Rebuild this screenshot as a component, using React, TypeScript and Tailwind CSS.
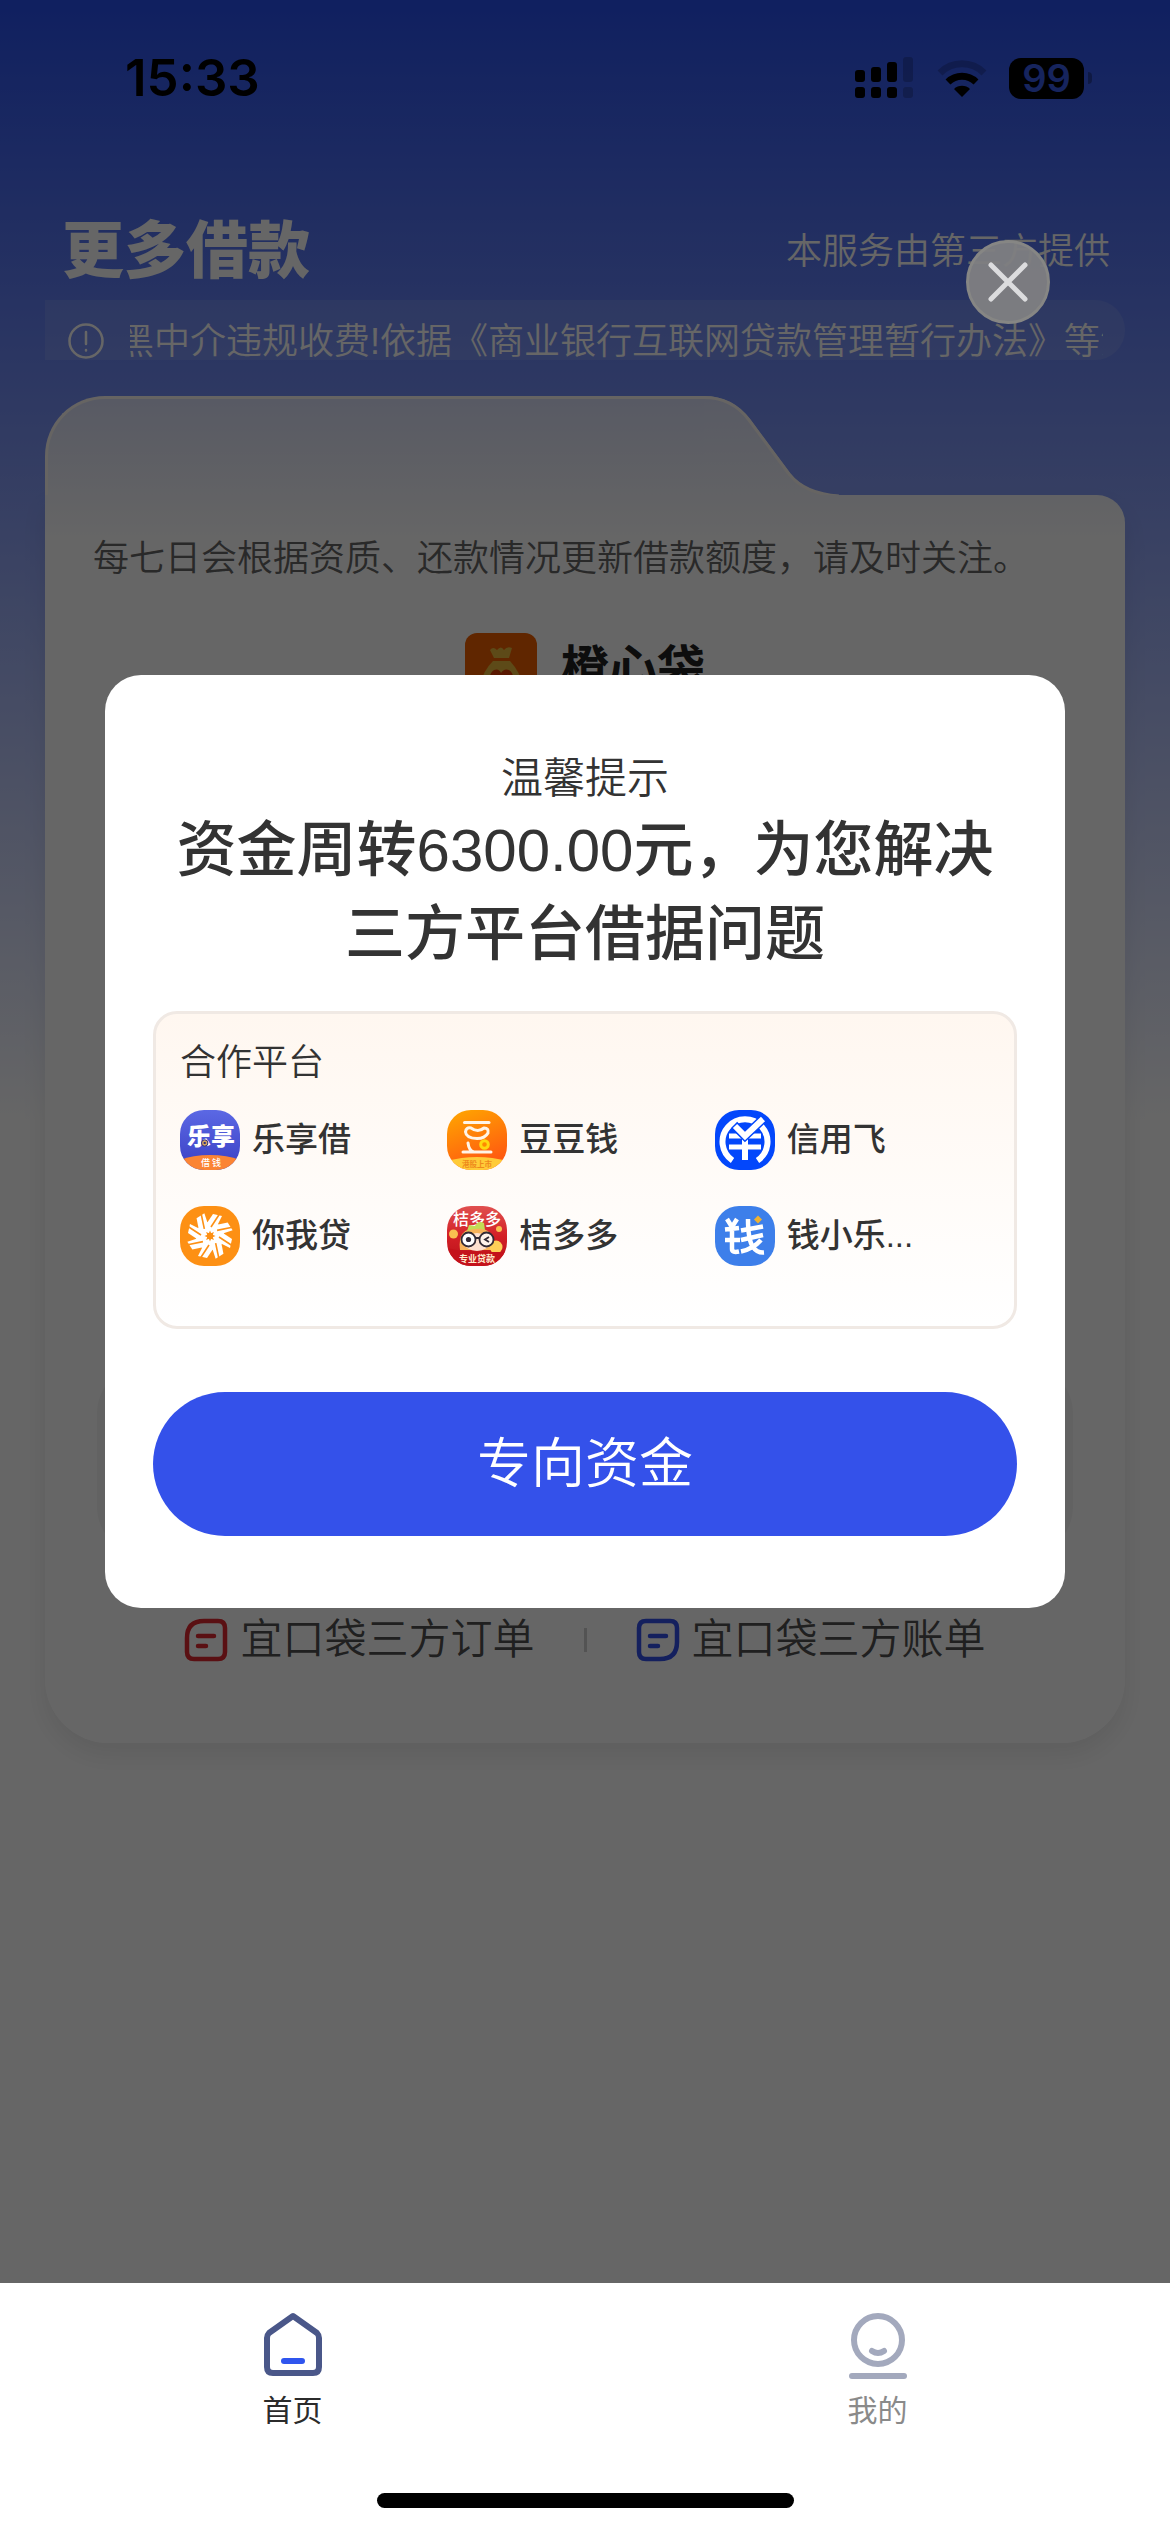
import type { ReactNode } from 'react';

function SignalIcon() {
  return (
    <svg className="h-[42px] w-[60px]" viewBox="0 0 60 42" aria-hidden="true">
      <rect x="0" y="13" width="10" height="12" rx="3" />
      <rect x="16" y="10" width="10" height="15" rx="3" />
      <rect x="32" y="5" width="10" height="20" rx="3" />
      <rect x="48" y="0" width="10" height="25" rx="3" opacity=".2" />
      <rect x="0" y="30" width="10" height="11" rx="3" />
      <rect x="16" y="30" width="10" height="11" rx="3" />
      <rect x="32" y="30" width="10" height="11" rx="3" />
      <rect x="48" y="30" width="10" height="11" rx="3" opacity=".2" />
    </svg>
  );
}

function WifiIcon() {
  return (
    <svg className="h-[40px] w-[50px]" viewBox="0 0 50 40" fill="none" aria-hidden="true">
      <path d="M3 15 A31 31 0 0 1 47 15" stroke="#000" strokeWidth="7" opacity=".2" />
      <path d="M11 24 A20 20 0 0 1 39 24" stroke="#000" strokeWidth="7" />
      <path d="M25 39 L17 31 A11.5 11.5 0 0 1 33 31 Z" fill="#000" />
    </svg>
  );
}

function StatusBar() {
  return (
    <div className="flex h-[156px] items-center justify-between pr-[78px] pl-[125px] font-['Inter',sans-serif] font-semibold">
      <span className="text-[51px] leading-[60px] text-black">15:33</span>
      <div className="flex items-center gap-[22px]">
        <SignalIcon />
        <WifiIcon />
        <div className="flex items-center gap-1">
          <span className="flex h-[41px] w-[75px] items-center justify-center rounded-xl bg-black text-[38px] leading-[41px] text-[#375be9]">
            99
          </span>
          <span className="h-[12px] w-[4px] rounded-r-full bg-black/30" />
        </div>
      </div>
    </div>
  );
}

function DocIcon({ color, flip }: { color: string; flip?: boolean }) {
  return (
    <svg className="size-[44px]" viewBox="0 0 44 44" fill="none" stroke={color} strokeWidth="4.5" strokeLinecap="round" strokeLinejoin="round" aria-hidden="true">
      {flip ? (
        <path d="M10 3 H34 Q41 3 41 10 V24 Q41 41 24 41 H10 Q3 41 3 34 V10 Q3 3 10 3 Z" />
      ) : (
        <path d="M20 3 H34 Q41 3 41 10 V34 Q41 41 34 41 H10 Q3 41 3 34 V20 Q3 3 20 3 Z" />
      )}
      <path d="M14 18 H30 M14 28 H22" />
    </svg>
  );
}

function BagIcon() {
  return (
    <svg className="size-[72px]" viewBox="0 0 72 72" aria-hidden="true">
      <rect width="72" height="72" rx="12" fill="#f06000" />
      <path d="M25 17 Q28 13 32 17 Q36 12 39 17 Q42 13 47 15 L44 25 H29 Z" fill="#e8b83c" />
      <path d="M28 28 H45 Q56 40 57 52 Q56 64 44 64 H28 Q17 64 15 52 Q18 38 28 28 Z" fill="#e8b83c" />
      <path d="M36 60 L27 52 Q22 42 29 37 Q34 35 36 40 Q39 35 44 37 Q51 42 46 52 Z" fill="#e03c00" />
    </svg>
  );
}

function PlatformIcon({ children }: { children: ReactNode }) {
  return (
    <svg className="size-[60px] shrink-0 rounded-[24px] font-['Noto_Sans_CJK_SC',sans-serif]" viewBox="0 0 60 60" fill="none" aria-hidden="true">
      {children}
    </svg>
  );
}

function LexiangIcon() {
  return (
    <PlatformIcon>
      <defs>
        <linearGradient id="lx" x1="0" y1="0" x2="0" y2="1">
          <stop offset="0" stopColor="#5b68e4" />
          <stop offset="1" stopColor="#3a3fc4" />
        </linearGradient>
      </defs>
      <rect width="60" height="60" fill="url(#lx)" />
      <text x="31" y="34.5" textAnchor="middle" fontSize="24" fontWeight="900" fill="#fff">乐享</text>
      <circle cx="24.7" cy="33" r="3.2" fill="#d8a35c" stroke="#2c2f80" strokeWidth="1" />
      <rect x="23.7" y="32" width="2" height="2" fill="#2c2f80" />
      <ellipse cx="30" cy="62" rx="42" ry="17" fill="#fb8434" />
      <text x="31" y="55.5" textAnchor="middle" fontSize="9" fontWeight="500" fill="#fff">借 钱</text>
    </PlatformIcon>
  );
}

function DoudouIcon() {
  return (
    <PlatformIcon>
      <defs>
        <linearGradient id="dd" x1="0" y1="0" x2=".4" y2="1">
          <stop offset="0" stopColor="#ffa800" />
          <stop offset="1" stopColor="#ff5a10" />
        </linearGradient>
      </defs>
      <rect width="60" height="60" fill="url(#dd)" />
      <ellipse cx="30" cy="61" rx="40" ry="14" fill="#ffcb38" />
      <g stroke="#fff4e6" strokeWidth="3" strokeLinecap="round" strokeLinejoin="round">
        <path d="M17.500 12.500 H42" />
        <path d="M24 18 Q31 23 37 18 Q42 18 41 23 Q38 28.500 30 28.500 Q19 28 18.500 22 Q19 17 24 18 Z" />
        <path d="M21 33 Q22 41 27 42 M16 42 H44" />
      </g>
      <circle cx="37.500" cy="34.500" r="3.800" stroke="#ffd90f" strokeWidth="3" fill="#ff8a00" />
      <text x="30" y="56.500" textAnchor="middle" fontSize="7.500" fontWeight="700" fill="#ee8a1c">港股上市</text>
    </PlatformIcon>
  );
}

function XinyongIcon() {
  return (
    <PlatformIcon>
      <rect width="60" height="60" fill="#0347fb" />
      <path d="M17.500 50.500 A22.500 22.500 0 1 1 42.500 50.500" stroke="#fff" strokeWidth="6" />
      <path d="M14 26 H46 M14 37 H46" stroke="#fff" strokeWidth="5" />
      <path d="M30 28 V50" stroke="#fff" strokeWidth="6" />
      <path d="M19 15 L30 26 L49 8" stroke="#0347fb" strokeWidth="9" />
      <path d="M20 16 L30 26 L48 9" stroke="#fff" strokeWidth="6" />
    </PlatformIcon>
  );
}

const BLADES = [0, 45, 90, 135, 180, 225, 270, 315];

function NiwoIcon() {
  return (
    <PlatformIcon>
      <rect width="60" height="60" fill="#fd9014" />
      <circle cx="30" cy="30" r="14" fill="#fff" />
      {BLADES.map((angle) => (
        <g key={angle} transform={`rotate(${angle} 30 30)`}>
          <path d="M25 20 L33 8 L42 10 L36 22 Z" fill="#fff" />
          <path d="M31 21 L39.500 8" stroke="#fd9014" strokeWidth="1.600" />
        </g>
      ))}
      {BLADES.map((angle) => (
        <path key={angle} d="M28.500 28 L30 24.500 L31.500 28 Z" fill="#fd9014" transform={`rotate(${angle} 30 30)`} />
      ))}
      <circle cx="30" cy="30" r="3" fill="#fd9014" />
    </PlatformIcon>
  );
}

function JuduoIcon() {
  return (
    <PlatformIcon>
      <defs>
        <linearGradient id="jd" x1="0" y1="0" x2="0" y2="1">
          <stop offset="0" stopColor="#e0504f" />
          <stop offset=".5" stopColor="#d32026" />
          <stop offset="1" stopColor="#b81018" />
        </linearGradient>
      </defs>
      <rect width="60" height="60" fill="url(#jd)" />
      <circle cx="6.500" cy="28" r="4.500" fill="#f9c050" />
      <circle cx="52" cy="23" r="3" fill="#f9c050" />
      <path d="M13 44 Q10 22 30 22 Q48 22 47 44 Z" fill="#f7b35a" />
      <ellipse cx="30" cy="36" rx="13" ry="9" fill="#fde0cf" />
      <circle cx="49" cy="41" r="6.500" fill="#ffcf57" />
      <path d="M0 42 Q16 46 30 45.500 Q46 46 60 46 V60 H0 Z" fill="#c4121b" />
      <text x="30" y="18.500" textAnchor="middle" fontSize="16" fontWeight="500" fill="#fff">桔多多</text>
      <path d="M20 25 L22 19 L28 20 Q31 14 37 17 L38 24 Q30 21 20 25 Z" fill="#c3dc55" />
      <circle cx="21.500" cy="33.500" r="7" fill="#fff" stroke="#332b35" strokeWidth="1.800" />
      <circle cx="39.500" cy="33.500" r="7" fill="#fff3ea" stroke="#332b35" strokeWidth="1.800" />
      <circle cx="21.500" cy="33.500" r="2.600" fill="#332b35" />
      <path d="M28.500 32 H32.500 M42 31 L38 33.500 L42 36" stroke="#332b35" strokeWidth="1.800" />
      <text x="30" y="56" textAnchor="middle" fontSize="9" fontWeight="700" fill="#ffeacb">专业贷款</text>
    </PlatformIcon>
  );
}

function QianIcon() {
  return (
    <PlatformIcon>
      <rect width="60" height="60" fill="#3d7fea" />
      <g stroke="#fff" strokeWidth="4.500" strokeLinejoin="round">
        <path d="M12 13 L17 21 L22 13" />
        <path d="M10 23.500 L24 22 M10 34 H25 M17 21 V43 Q17 47 24 45.500" />
        <path d="M33 13 Q33 34 38 41 Q42 47 49 46.500" />
        <path d="M26 24.500 L48 20.500 M26 34 L48 29 M46 34 Q38 43 26 45.500" />
      </g>
      <path d="M43 9.500 L47 13.500 L43 17.500 L39 13.500 Z" fill="#eeb131" />
    </PlatformIcon>
  );
}

const PLATFORMS = [
  { name: '乐享借', Icon: LexiangIcon },
  { name: '豆豆钱', Icon: DoudouIcon },
  { name: '信用飞', Icon: XinyongIcon },
  { name: '你我贷', Icon: NiwoIcon },
  { name: '桔多多', Icon: JuduoIcon },
  { name: '钱小乐...', Icon: QianIcon },
];

function NoticeBar() {
  return (
    <div className="mx-[45px] flex h-[60px] items-end rounded-r-full bg-white/10 pr-[22px] pl-[23px] text-white">
      <svg className="h-[38px] w-[36px] shrink-0" viewBox="0 0 36 38" fill="none" stroke="#fff" strokeWidth="2.5" strokeLinecap="round" aria-hidden="true">
        <circle cx="18" cy="19" r="16.5" />
        <path d="M18 10 V22 M18 28 V28.5" />
      </svg>
      <div className="ml-[26px] h-10 min-w-0 flex-1 overflow-hidden">
        <p className="-ml-3 text-4xl leading-[44px] font-[350] whitespace-nowrap">
          黑中介违规收费!依据《商业银行互联网贷款管理暂行办法》等法律
        </p>
      </div>
    </div>
  );
}

function LoanCard() {
  return (
    <section className="mx-[45px] mt-9">
      <div className="grid grid-cols-[659fr_135px_286px]">
        <div className="rounded-tl-[60px] border-t-3 border-l-3 border-[#fffaf5] bg-linear-to-b from-[#dce1fa] to-[#f4f5fc]" />
        <svg className="h-[99px] w-[135px]" viewBox="0 0 135 99" fill="none" aria-hidden="true">
          <defs>
            <linearGradient id="tab" x1="0" y1="0" x2="0" y2="1">
              <stop offset="0" stopColor="#dce1fa" />
              <stop offset="1" stopColor="#f4f5fc" />
            </linearGradient>
          </defs>
          <path d="M0 0 Q28 0 46 23 L86 77 Q102 98 135 99 H0 Z" fill="url(#tab)" />
          <path d="M0 1.500 Q28 1.500 45 24 L85 78 Q101 98 135 100" stroke="#fffaf5" strokeWidth="3" />
        </svg>
      </div>
      <div className="rounded-tr-[28px] rounded-b-[64px] bg-[linear-gradient(#f4f5fc,#fff_45px)] px-[52px] pt-[38px] pb-[77px] shadow-[0_12px_24px_rgba(0,0,0,0.08)]">
        <p className="-mx-1 text-4xl leading-[52px] font-[350] whitespace-nowrap text-[#666]">
          每七日会根据资质、还款情况更新借款额度，请及时关注。
        </p>
        <div className="mt-12 flex items-center justify-center gap-6">
          <BagIcon />
          <h2 className="text-5xl leading-[72px] font-bold text-[#222]">橙心袋</h2>
        </div>
        <div className="mt-[660px] h-[190px] rounded-[48px] bg-[#f6f6f6]" />
        <div className="mt-[59px] flex items-center justify-center gap-[49px] text-[42px] leading-[52px] font-[350] text-[#505050]">
          <a href="#orders" className="flex items-center gap-3">
            <DocIcon color="#e02a30" />
            宜口袋三方订单
          </a>
          <span className="h-6 w-[3px] bg-[#d0d0d0]" />
          <a href="#bills" className="flex items-center gap-3">
            <DocIcon color="#3452ea" flip />
            宜口袋三方账单
          </a>
        </div>
      </div>
    </section>
  );
}

function OfferDialog() {
  return (
    <div role="dialog" aria-modal="true" aria-labelledby="offer-title" className="mx-[105px] w-full rounded-[36px] bg-white px-12 pt-[74px] pb-[72px] text-[#333]">
      <p className="text-center text-[42px] leading-[60px] font-[350]">温馨提示</p>
      <h1 id="offer-title" className="text-center text-[60px] leading-[84px] font-medium">
        资金周转6300.00元，为您解决三方平台借据问题
      </h1>
      <section className="mt-[34px] rounded-[24px] border-3 border-[#f0e9e4] bg-linear-to-b from-[#fff7f0] to-white pt-[23px] pr-8 pb-[60px] pl-6">
        <h2 className="text-4xl leading-[52px] font-[350]">合作平台</h2>
        <ul className="mt-[21px] grid grid-cols-3 gap-y-9">
          {PLATFORMS.map(({ name, Icon }) => (
            <li key={name} className="flex items-center gap-3 text-[33px] leading-[48px] font-medium">
              <Icon />
              {name}
            </li>
          ))}
        </ul>
      </section>
      <button type="button" className="mt-[63px] h-[144px] w-full rounded-full bg-[#3451ea] text-[54px] leading-[72px] font-[350] text-white">
        专向资金
      </button>
    </div>
  );
}

function TabBar() {
  return (
    <nav className="bg-white pt-6">
      <div className="grid grid-cols-2 text-[30px] leading-[42px]">
        <a href="#home" className="flex flex-col items-center gap-2 text-[#2b2b2b]">
          <svg className="h-[75px] w-[64px]" viewBox="0 0 64 75" fill="none" aria-hidden="true">
            <path d="M32 9 L56 26 Q58 28 58 31 V60 Q58 66 52 66 H12 Q6 66 6 60 V31 Q6 28 8 26 Z" stroke="#4a5789" strokeWidth="6" strokeLinejoin="round" />
            <path d="M23 54 H41" stroke="#2f55ee" strokeWidth="6" strokeLinecap="round" />
          </svg>
          首页
        </a>
        <a href="#mine" className="flex flex-col items-center gap-2 text-[#8a8a8a]">
          <svg className="h-[75px] w-[64px]" viewBox="0 0 64 75" fill="none" stroke="#a3a9bd" strokeWidth="6" strokeLinecap="round" aria-hidden="true">
            <circle cx="32" cy="33" r="24" />
            <path d="M26 44 Q32 48 38 44" />
            <path d="M6 69 H58" />
          </svg>
          我的
        </a>
      </div>
      <div className="flex justify-center pt-[61px] pb-6">
        <span className="h-[15px] w-[417px] rounded-full bg-black" />
      </div>
    </nav>
  );
}

export default function App() {
  return (
    <div className="flex min-h-screen flex-col bg-white font-['Liberation_Sans','Noto_Sans_CJK_SC',sans-serif]">
      <main className="relative flex-1 bg-[linear-gradient(#2850f0,#fff_1120px)]">
        <StatusBar />
        <header className="flex items-center justify-between pt-[56px] pr-[60px] pb-[8px] pl-[62px] text-white">
          <span className="text-[62px] leading-[80px] font-black">更多借款</span>
          <span className="text-4xl leading-[52px] font-[350]">本服务由第三方提供</span>
        </header>
        <NoticeBar />
        <LoanCard />
        <div className="absolute inset-0 flex items-center justify-center bg-black/60">
          <OfferDialog />
          <button type="button" aria-label="关闭" className="absolute top-[240px] right-[120px] flex size-[84px] items-center justify-center rounded-full border-3 border-[#868684] bg-[#7f8082]/95">
            <svg className="size-[40px]" viewBox="0 0 40 40" fill="none" stroke="#dcdcde" strokeWidth="5" strokeLinecap="round" aria-hidden="true">
              <path d="M3 3 L37 37 M37 3 L3 37" />
            </svg>
          </button>
        </div>
      </main>
      <TabBar />
    </div>
  );
}
